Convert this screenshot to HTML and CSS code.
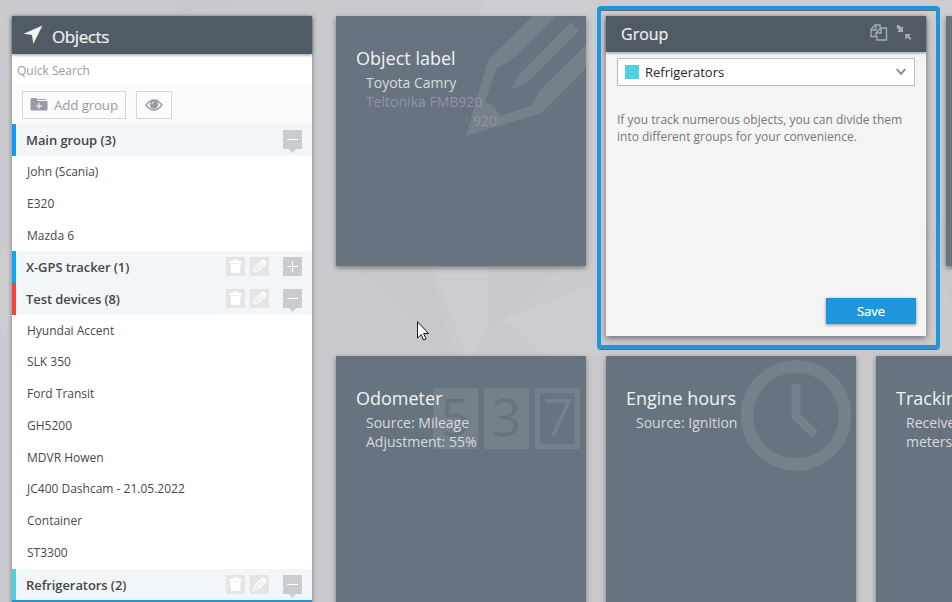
FILE: index.html
```html
<!DOCTYPE html>
<html lang="en">
<head>
<meta charset="utf-8">
<title>Objects</title>
<link rel="stylesheet" href="styles.css">
</head>
<body>
<svg class="defs" width="0" height="0" aria-hidden="true">
  <symbol id="trash" viewBox="0 0 19 19"><path fill="#fff" d="M3.500 4h3.500v-1.500h5V4h3.500v2.500H3.500zM4.300 7h10.400l-.9 9H5.200z"/></symbol>
  <symbol id="pencil" viewBox="0 0 19 19"><path fill="#fff" fill-rule="evenodd" d="M3 15.800l1.500-5.800L11.500 3q1.500-1 3.200.4l.8.8q1.200 1.600.2 3L9 14.200zM5.700 11l-1 2.600 1 .8 2.500-.9 6-6-.7-.6-5.700 5.500-.9-.8L12.700 6l-.8-.7z"/></symbol>
  <symbol id="minus" viewBox="0 0 19 24"><path fill="#cbcccf" d="M0 0h19v19h-6l-3.500 4L6 19H0z"/><path fill="#fff" d="M4 9h11v1H4z"/></symbol>
  <symbol id="plus" viewBox="0 0 19 24"><path fill="#cbcccf" d="M0 0h19v19H0z"/><path fill="#fff" d="M4 9h11v1H4zM9 4h1v11H9z"/></symbol>
</svg>
<svg class="backdrop" viewBox="0 0 952 602" aria-hidden="true">
  <path fill="#cdccd0" d="M484 0h468v16H480zM433 268h55v57l-14 31h-8z"/>
  <path fill="#c8c7cb" d="M355 268l78 0 20 88h-12l-30-40zM488 268h70l-55 52-15 12zM180 12l70-12h-70zM926 230l26-12v90z"/>
  <path fill="#cdccd0" d="M503 320l95-37v73h-50zM0 250l12-10v110L0 330z"/>
</svg>
<aside class="sidebar">
  <header class="side-head">
    <svg width="20" height="20" viewBox="0 0 20 20"><path fill="#f2f2f2" d="M19.500.5L10.300 19 9 10 .5 8.700z"/></svg>
    <h1>Objects</h1>
  </header>
  <div class="search">Quick Search</div>
  <div class="tools">
    <button class="tool add"><svg width="18" height="14" viewBox="0 0 18 14"><path fill="#9a9ba7" fill-rule="evenodd" d="M1.500 0h5l1 1.500V3H17.500v8.500q0 1-1 1h-15q-1 0-1-1V1.500Q.5 0 1.500 0zM8.500 5v2.500H6v1h2.500V11h1V8.500H12v-1H9.500V5zM8 1h7.500l.5 1H8z"/></svg><span>Add group</span></button>
    <button class="tool eye"><svg width="18" height="12" viewBox="0 0 18 12"><path d="M1 6q8-10 16 0-8 10-16 0z" fill="none" stroke="#9a9ba7" stroke-width="1.300"/><circle cx="9" cy="5.500" r="4.200" fill="#9a9ba7"/><path d="M6.800 5q.3-1.700 2-1.900" fill="none" stroke="#fff"/></svg></button>
  </div>
  <div class="group blue"><b>Main group (3)</b><svg class="toggle"><use href="#minus"/></svg></div>
  <div class="item">John (Scania)</div>
  <div class="item">E320</div>
  <div class="item low">Mazda 6</div>
  <div class="group sky"><b>X-GPS tracker (1)</b><svg class="act"><use href="#trash"/></svg><svg class="act"><use href="#pencil"/></svg><svg class="toggle"><use href="#plus"/></svg></div>
  <div class="group red"><b>Test devices (8)</b><svg class="act"><use href="#trash"/></svg><svg class="act"><use href="#pencil"/></svg><svg class="toggle"><use href="#minus"/></svg></div>
  <div class="item">Hyundai Accent</div>
  <div class="item">SLK 350</div>
  <div class="item">Ford Transit</div>
  <div class="item">GH5200</div>
  <div class="item">MDVR Howen</div>
  <div class="item">JC400 Dashcam - 21.05.2022</div>
  <div class="item">Container</div>
  <div class="item">ST3300</div>
  <div class="group cyan"><b>Refrigerators (2)</b><svg class="act"><use href="#trash"/></svg><svg class="act"><use href="#pencil"/></svg><svg class="toggle"><use href="#minus"/></svg></div>
  <div class="active-line"></div>
</aside>
<main class="board">
  <div class="row top">
    <section class="tile">
      <svg class="art" viewBox="0 0 250 250"><path fill="#75808b" fill-rule="evenodd" d="M197 0h23l-42 42-18 11-11 33q11 4 15 14l31-10 10-17 45-44v23l-45 45-75 23 22-76zM235 6l8 9-52 52-16 7 8-15z"/></svg>
      <h2>Object label</h2>
      <p>Toyota Camry</p>
      <p class="dim">Teltonika FMB920</p>
      <p class="dim tail"><i></i>920</p>
    </section>
    <section class="panel">
      <header><h2>Group</h2>
        <svg width="18" height="18" viewBox="0 0 18 18" fill="none" stroke="#a6adb2" stroke-width="1.400"><path d="M6 12.500H1V5.500L5 1h5v3M1 6h5V1"/><path d="M6 12V9l5-5h5.500v12H7v-4M7 9h4V4"/></svg>
        <svg width="16" height="17" viewBox="0 0 16 17"><path fill="#a6adb2" d="M1 1l2 0 2.500 2.500L7 2v6H1l2-2L.5 3.500zM9 10h6l-2 2 2.500 2.500-1.500 1.500L11.500 13.500 9.500 15.500z"/></svg>
      </header>
      <div class="select"><span class="swatch"></span><span class="value">Refrigerators</span><svg width="10" height="8" viewBox="0 0 10 8"><path d="M.8 1.200L5 5.800 9.200 1.200" fill="none" stroke="#8b8c94" stroke-width="2"/></svg></div>
      <p class="hint">If you track numerous objects, you can divide them<br>into different groups for your convenience.</p>
      <button class="save">Save</button>
      <div class="frame"></div>
    </section>
    <section class="tile"></section>
  </div>
  <div class="row">
    <section class="tile">
      <svg class="art" viewBox="0 0 250 250"><path fill="#75808b" fill-rule="evenodd" d="M97 32h45v61H97zM148 32h45v61h-45zM199 32h45v61h-45zM204 37v51h35V37z"/><g font-size="52" text-anchor="middle"><text class="digit" x="119" y="80">5</text><text class="digit" x="170" y="80">3</text><text class="digit seven" x="222" y="80">7</text></g></svg>
      <h2>Odometer</h2>
      <p>Source: Mileage</p>
      <p>Adjustment: 55%</p>
    </section>
    <section class="tile">
      <svg class="art" viewBox="0 0 250 250"><circle cx="190" cy="59.500" r="49" fill="none" stroke="#75808b" stroke-width="12.500"/><path d="M190 28v32l19 19" fill="none" stroke="#75808b" stroke-width="9"/></svg>
      <h2>Engine hours</h2>
      <p>Source: Ignition</p>
    </section>
    <section class="tile">
      <h2>Tracking</h2>
      <p>Receive<br>meters</p>
    </section>
  </div>
</main>
<svg class="cursor" width="12" height="20" viewBox="0 0 12 20"><path d="M.5.7v16.300l3.700-3.500 2.300 5.500 2.600-1-2.500-5.500h5z" fill="#fff" stroke="#181820"/></svg>
</body>
</html>
```

FILE: styles.css
```css
* { box-sizing: border-box; }
body {
  margin: 0;
  width: 952px;
  height: 602px;
  overflow: hidden;
  position: relative;
  display: flex;
  gap: 24px;
  padding: 16px 0 0 12px;
  background: #cac9cd;
  font-family: "Open Sans", sans-serif;
}
h1, h2, p { margin: 0; font-weight: 400; }
button { font: inherit; padding: 0; }
.defs { position: absolute; }
.backdrop { position: absolute; left: 0; top: 0; width: 952px; height: 602px; z-index: -1; }

.sidebar {
  flex: 0 0 300px;
  height: 620px;
  background: #fff;
  box-shadow: 0 1px 5px rgba(0, 0, 0, .4);
}
.side-head {
  position: relative;
  height: 38px;
  display: flex;
  gap: 9px;
  padding: 9px 0 0 11px;
  background: #505b65;
  box-shadow: 0 1px 3px rgba(0, 0, 0, .4);
}
.side-head h1 { font-size: 17px; line-height: 24px; color: #f2f2f2; letter-spacing: -.4px; -webkit-text-stroke: .2px #f2f2f2; }
.search { height: 32px; padding-left: 5px; font-size: 12px; line-height: 34px; color: #9a9ba7; }
.tools { height: 38px; display: flex; gap: 10px; padding: 5px 10px; background: #fbfbfb; }
.tool {
  height: 28px;
  border: 1px solid #d6d6dc;
  background: #fcfcfc;
  color: #9a9ba7;
  display: flex;
  align-items: center;
  justify-content: center;
  font-size: 13.500px;
}
.add { width: 104px; gap: 6px; }
.add span { letter-spacing: -.25px; }
.eye { width: 36px; }

.group {
  height: 31.750px;
  display: flex;
  align-items: flex-start;
  gap: 5px;
  padding: 6px 10px 0 10px;
  border-left: 4px solid;
  background: #f2f6f9;
  font-size: 13px;
}
.group b { flex: 1; font-weight: 600; line-height: 21px; color: #464646; letter-spacing: -.08px; }
.blue { border-color: #0a9bff; }
.sky { border-color: #07a8f5; }
.red { border-color: #f44438; }
.cyan { border-color: #4dd0e1; }
.act { width: 19px; height: 19px; background: #e5e5e5; }
.toggle { width: 19px; height: 24px; margin-left: 9px; }
.item { height: 31.750px; padding-left: 15px; font-size: 12px; line-height: 32px; color: #484848; }
.low { line-height: 34px; }
.active-line { height: 3px; background: #1f96dc; }

.board { display: flex; flex-direction: column; gap: 20px; }
.row { display: flex; gap: 20px; align-items: flex-start; }
.tile {
  position: relative;
  flex: 0 0 250px;
  height: 250px;
  padding: 30px 0 0 20px;
  background: #687380;
  box-shadow: 0 2px 5px rgba(0, 0, 0, .4);
  overflow: hidden;
  color: #d9dbdd;
}
.tile h2 { position: relative; font-size: 18px; line-height: 25px; color: #f1f2f3; margin-bottom: 2px; white-space: nowrap; }
.tile p { position: relative; padding-left: 10px; font-size: 14px; line-height: 19px; white-space: nowrap; }
.tile .dim { color: #9294a0; }
.tile .tail { padding-left: 110px; display: flex; align-items: center; gap: 6px; }
.tail i { width: 1px; height: 10px; background: #83766f; }
.art { position: absolute; left: 0; top: 0; width: 250px; height: 250px; }
.digit { fill: #687380; }
.seven { fill: #75808b; }

.panel {
  position: relative;
  flex: 0 0 320px;
  height: 320px;
  display: flex;
  flex-direction: column;
  background: #f4f4f4;
  box-shadow: 0 2px 6px rgba(0, 0, 0, .45);
}
.panel header {
  height: 36px;
  display: flex;
  gap: 8px;
  padding: 8px 14px 0 15px;
  background: #505b65;
  box-shadow: 0 1px 3px rgba(0, 0, 0, .4);
}
.panel h2 { flex: 1; font-size: 16px; line-height: 20px; font-weight: 500; color: #f0f0f0; -webkit-text-stroke: .2px #f0f0f0; }
.select {
  height: 28px;
  margin: 6px 11px 0;
  display: flex;
  align-items: center;
  padding: 0 8px 0 7px;
  border: 1px solid #b9bac4;
  background: #fff;
}
.swatch { width: 14px; height: 14px; margin-right: 6px; background: #4dd0e1; }
.value { flex: 1; font-size: 13px; color: #262630; }
.hint { margin: 25px 11px 0; font-size: 12px; line-height: 17px; color: #777; white-space: nowrap; }
.save {
  width: 90px;
  height: 26px;
  margin: auto 10px 12px auto;
  border: 0;
  background: #1f96dc;
  color: #fff;
  font-size: 13px;
  -webkit-text-stroke: .2px #fff;
  box-shadow: 0 1px 3px rgba(0, 0, 0, .4);
}
.frame {
  position: absolute;
  left: -9px;
  top: -10px;
  width: 343px;
  height: 343px;
  border: 4px solid #1f96dc;
  border-radius: 4px;
  box-shadow: 0 1px 0 #656c75, inset 0 1px 0 #656c75;
}
.cursor { position: absolute; left: 417px; top: 321px; }
```
